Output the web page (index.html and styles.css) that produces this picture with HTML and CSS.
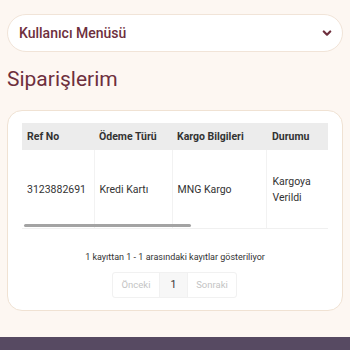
FILE: index.html
```html
<!DOCTYPE html>
<html lang="tr">
<head>
<meta charset="utf-8">
<link rel="stylesheet" href="styles.css">
</head>
<body>
<div class="page">
  <div class="menu">
    <span class="menu-label">Kullanıcı Menüsü</span>
    <svg class="chev" width="10" height="7" viewBox="0 0 10 7"><path d="M1.8 1.5 L5 4.7 L8.2 1.5" fill="none" stroke="#6e2f3d" stroke-width="2.2" stroke-linecap="round" stroke-linejoin="round"/></svg>
  </div>
  <h1 class="title">Siparişlerim</h1>
  <div class="card">
    <div class="scroll">
      <table class="orders">
        <colgroup>
          <col class="c1"><col class="c2"><col class="c3"><col class="c4">
        </colgroup>
        <thead>
          <tr><th>Ref No</th><th>Ödeme Türü</th><th>Kargo Bilgileri</th><th>Durumu</th></tr>
        </thead>
        <tbody>
          <tr><td>3123882691</td><td>Kredi Kartı</td><td>MNG Kargo</td><td>Kargoya Verildi</td></tr>
        </tbody>
      </table>
      <div class="thumb"></div>
    </div>
    <p class="info">1 kayıttan 1 - 1 arasındaki kayıtlar gösteriliyor</p>
    <div class="pager">
      <span class="pg disabled">Önceki</span>
      <span class="pg current">1</span>
      <span class="pg disabled">Sonraki</span>
    </div>
  </div>
</div>
<div class="footer"></div>
</body>
</html>
```
FILE: styles.css
```css
* { box-sizing: border-box; }
html, body { margin: 0; padding: 0; }
body {
  background: #fdf7f2;
  font-family: Roboto, "Liberation Sans", sans-serif;
  width: 350px;
  height: 350px;
  overflow: hidden;
}
.page {
  padding: 14px 7px 0 7px;
  height: 337px;
}
.menu {
  height: 38px;
  background: #fff;
  border: 1px solid #f1e4d8;
  border-radius: 19px;
  display: flex;
  align-items: center;
  justify-content: space-between;
  padding: 0 10px 0 11px;
}
.menu-label {
  color: #6e2f3d;
  font-size: 14px;
  font-weight: 500;
}
.chev { display: block; }
.title {
  margin: 12px 0 0 0;
  font-size: 21px;
  font-weight: 400;
  color: #6e2f3d;
  line-height: 30px;
}
.card {
  margin-top: 16px;
  height: 201px;
  background: #fff;
  border: 1px solid #f0e2d3;
  border-radius: 15px;
  padding: 12px 14px 0 14px;
}
.scroll {
  position: relative;
  overflow: hidden;
  width: 306px;
}
.thumb {
  position: absolute;
  left: 2px;
  bottom: 2px;
  width: 167px;
  height: 3px;
  border-radius: 2px;
  background: #a3a3a3;
}
.orders {
  border-collapse: collapse;
  table-layout: fixed;
  width: 306px;
  font-size: 10px;
  color: #333;
}
.c1 { width: 72px; }
.c2 { width: 78px; }
.c3 { width: 94px; }
.c4 { width: 62px; }
.orders th {
  background: #ececec;
  text-align: left;
  font-weight: 700;
  font-size: 10.5px;
  height: 27px;
  padding: 0 5px;
  color: #333;
  white-space: nowrap;
}
.orders td {
  height: 78px;
  padding: 2px 5px 0 5px;
  border-right: 1px solid #f2f2f2;
  border-bottom: 1px solid #f0f0f0;
  vertical-align: middle;
  line-height: 16px;
  color: #333;
  font-size: 10.5px;
}
.orders td:last-child { border-right: none; padding-left: 6px; padding-right: 12px; }
.orders th:last-child { padding-left: 6px; }
.info {
  margin: 21px 0 0 0;
  text-align: center;
  font-size: 9px;
  color: #333;
  line-height: 14px;
}
.pager {
  margin-top: 8px;
  display: flex;
  justify-content: center;
}
.pg {
  height: 26px;
  display: flex;
  align-items: center;
  justify-content: center;
  font-size: 9.5px;
  border: 1px solid #f1f1f1;
  margin-left: -1px;
}
.pg:first-child { width: 48px; border-radius: 3px 0 0 3px; }
.pg:last-child { width: 50px; border-radius: 0 3px 3px 0; }
.disabled { color: #c4c4c4; }
.current { width: 29px; background: #f7f7f7; color: #333; font-size: 10.5px; }
.footer {
  height: 13px;
  background: #574a62;
}
```
